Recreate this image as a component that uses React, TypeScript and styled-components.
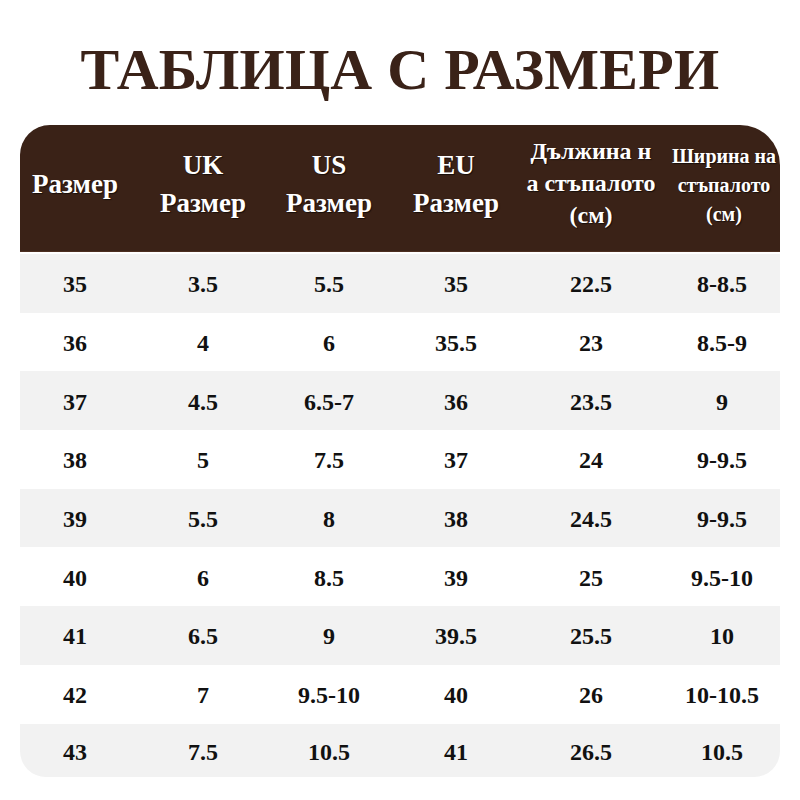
import React from "react";
import styled, { createGlobalStyle } from "styled-components";

const Global = createGlobalStyle`
  html, body { margin: 0; padding: 0; background: #ffffff; }
  body { font-family: "Liberation Serif", "Times New Roman", serif; }
`;

const Page = styled.div`
  width: 800px;
  height: 800px;
  display: flex;
  flex-direction: column;
  align-items: center;
  background: #ffffff;
  overflow: hidden;
`;

const Title = styled.h1`
  margin: 40px 0 25px;
  height: 60px;
  font-family: "Liberation Serif", "Times New Roman", serif;
  font-weight: 700;
  font-size: 58px;
  line-height: 60px;
  color: #3a2218;
  letter-spacing: 0.3px;
  white-space: nowrap;
`;

const Table = styled.div`
  width: 760px;
  display: flex;
  flex-direction: column;
`;

const COLS = "110px 146px 106px 148px 122px 128px";

const Header = styled.div`
  display: grid;
  grid-template-columns: ${COLS};
  height: 127px;
  box-sizing: border-box;
  padding-bottom: 11px;
  background: #3a2217;
  border-radius: 30px 40px 0 0;
  border-bottom: 1px solid #4c2e20;
  margin-bottom: 2px;
`;

const HeadCell = styled.div<{ $size: number; $lh: number; $dy?: number; $shift?: number }>`
  display: flex;
  flex-direction: column;
  align-items: center;
  justify-content: center;
  color: #ffffff;
  font-weight: 700;
  font-size: ${(p) => p.$size}px;
  line-height: ${(p) => p.$lh}px;
  white-space: nowrap;
  text-shadow: 1px 1px 1px rgba(0, 0, 0, 0.6);
  padding-top: ${(p) => p.$dy ?? 0}px;
  padding-left: ${(p) => p.$shift ?? 0}px;
`;

const Row = styled.div<{ $shade: boolean; $last: boolean }>`
  display: grid;
  grid-template-columns: ${COLS};
  height: ${(p) => (p.$last ? 53 : 58.7)}px;
  align-items: center;
  background: ${(p) => (p.$shade ? "#f2f2f2" : "#ffffff")};
  border-radius: ${(p) => (p.$last ? "0 0 26px 26px" : "0")};
`;

const Cell = styled.div<{ $shift?: number; $dy?: number }>`
  text-align: center;
  font-weight: 700;
  font-size: 24px;
  color: #111111;
  white-space: nowrap;
  padding-left: ${(p) => p.$shift ?? 0}px;
  padding-top: ${(p) => p.$dy ?? 2}px;
`;

const headers: { lines: string[]; size: number; lh: number; dy?: number; shift?: number }[] = [
  { lines: ["Размер"], size: 27, lh: 30, dy: 2 },
  { lines: ["UK", "Размер"], size: 27, lh: 38, dy: 2 },
  { lines: ["US", "Размер"], size: 27, lh: 38, dy: 2 },
  { lines: ["EU", "Размер"], size: 27, lh: 38, dy: 2 },
  { lines: ["Дължина н", "а стъпалото", "(см)"], size: 24, lh: 32, dy: 0 },
  { lines: ["Ширина на", "стъпалото", "(см)"], size: 20, lh: 29, dy: 5, shift: 16 },
];

const rows: string[][] = [
  ["35", "3.5", "5.5", "35", "22.5", "8-8.5"],
  ["36", "4", "6", "35.5", "23", "8.5-9"],
  ["37", "4.5", "6.5-7", "36", "23.5", "9"],
  ["38", "5", "7.5", "37", "24", "9-9.5"],
  ["39", "5.5", "8", "38", "24.5", "9-9.5"],
  ["40", "6", "8.5", "39", "25", "9.5-10"],
  ["41", "6.5", "9", "39.5", "25.5", "10"],
  ["42", "7", "9.5-10", "40", "26", "10-10.5"],
  ["43", "7.5", "10.5", "41", "26.5", "10.5"],
];

export default function App() {
  return (
    <Page>
      <Global />
      <Title>ТАБЛИЦА С РАЗМЕРИ</Title>
      <Table>
        <Header>
          {headers.map((h, i) => (
            <HeadCell key={i} $size={h.size} $lh={h.lh} $dy={h.dy} $shift={h.shift}>
              {h.lines.map((l, j) => (
                <span key={j}>{l}</span>
              ))}
            </HeadCell>
          ))}
        </Header>
        {rows.map((r, i) => {
          const last = i === rows.length - 1;
          return (
            <Row key={i} $shade={i % 2 === 0} $last={last}>
              {r.map((c, j) => (
                <Cell key={j} $shift={j === 5 ? 12 : 0} $dy={last ? 5 : 3}>
                  {c}
                </Cell>
              ))}
            </Row>
          );
        })}
      </Table>
    </Page>
  );
}
